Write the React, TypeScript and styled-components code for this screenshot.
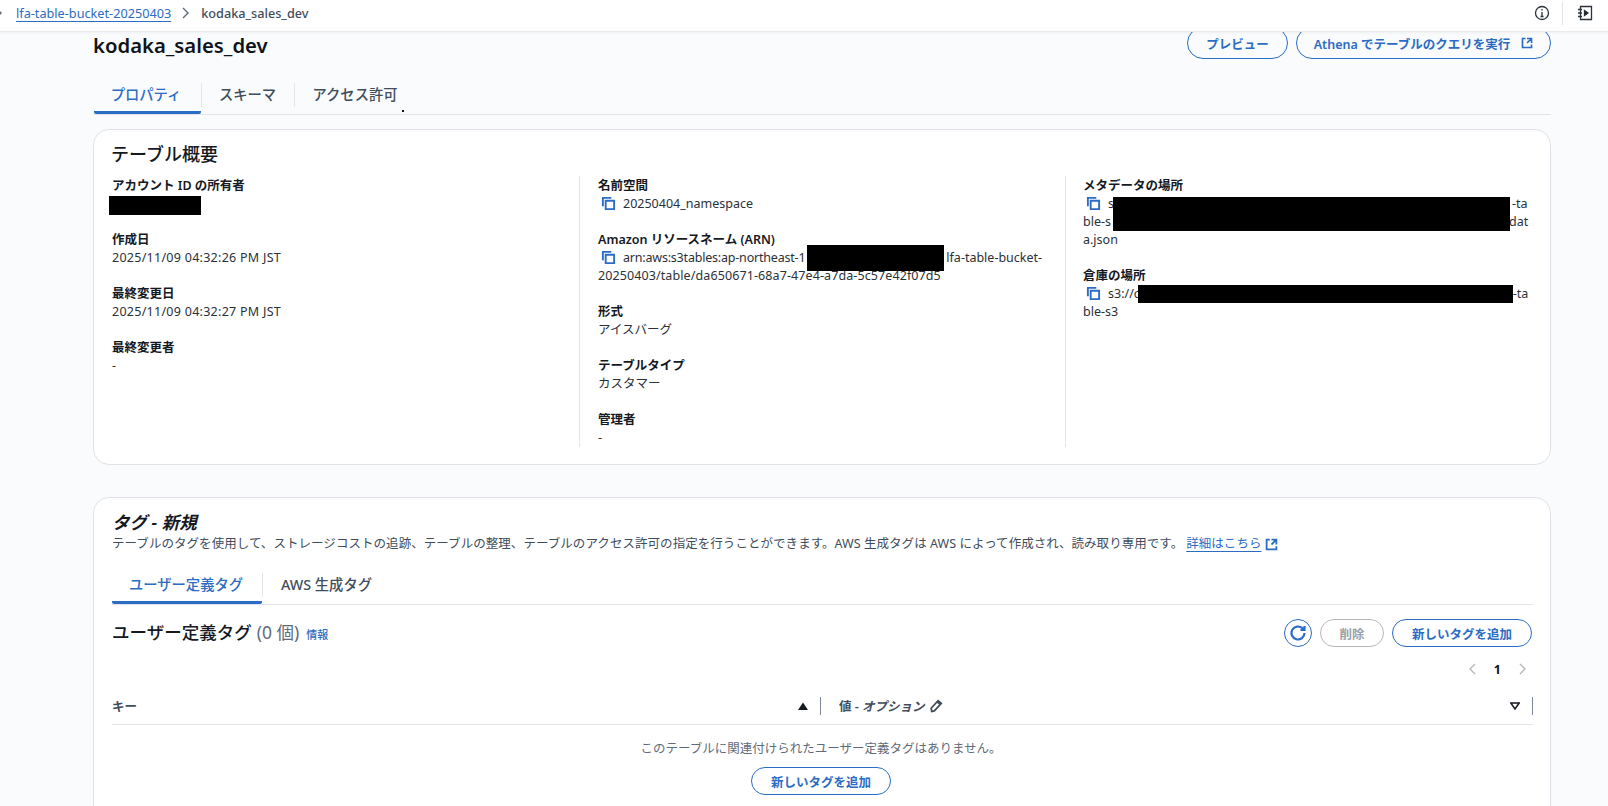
import React from "react";
import styled, { createGlobalStyle } from "styled-components";

const Global = createGlobalStyle`
  html, body { margin: 0; padding: 0; height: 100%; }
  body {
    background: #fafbfd;
    color: #16191f;
    font-family: "Noto Sans", "Noto Sans CJK JP", sans-serif;
    font-size: 13px;
    overflow: hidden;
  }
  * { box-sizing: border-box; }
`;

const blue = "#2b6cc4";

const Page = styled.div`
  width: 1608px;
  height: 806px;
  overflow: hidden;
`;
const TopBar = styled.header`
  position: relative;
  z-index: 2;
  height: 32px;
  background: #fff;
  border-bottom: 1px solid #e9ebed;
  box-shadow: 0 1px 3px rgba(0, 7, 22, 0.05);
  display: flex;
  align-items: center;
  padding: 0 15px 5px 0;
  font-size: 12.7px;
`;
const Chevron = styled.svg<{ $gap: number; $right: number }>`
  width: 12px;
  height: 12px;
  margin: 0 ${(p) => p.$right}px 0 ${(p) => p.$gap}px;
  fill: none;
  stroke: #5f6b7a;
  stroke-width: 1.4;
  flex: none;
`;
const CrumbLink = styled.a`
  color: ${blue};
  text-decoration: underline;
  text-underline-offset: 3px;
`;
const CrumbCurrent = styled.span`
  color: #414d5c;
  font-weight: 500;
`;
const TopIcons = styled.div`
  margin-left: auto;
  display: flex;
  align-items: center;
`;
const TopIcon = styled.svg`
  width: 16px;
  height: 16px;
  fill: none;
  stroke: #2b3139;
  stroke-width: 1.3;
`;
const TopDivider = styled.span`
  width: 1px;
  height: 23px;
  background: #e3e5e8;
  margin: 0 14px 0 12px;
`;
const Main = styled.main`
  padding: 0 57px 0 93px;
`;
const TitleRow = styled.div`
  margin-top: -5px;
  height: 32px;
  display: flex;
  align-items: center;
  justify-content: space-between;
`;
const Title = styled.h1`
  margin: 4px 0 0 0;
  font-size: 20.3px;
  line-height: 32px;
  font-weight: 600;
  color: #0f141a;
`;
const Actions = styled.div`
  display: flex;
  align-items: center;
  gap: 8px;
`;
const PillButton = styled.button<{ $disabled?: boolean; $w?: number; $h?: number }>`
  height: ${(p) => p.$h ?? 28}px;
  width: ${(p) => (p.$w ? `${p.$w}px` : "auto")};
  border-radius: 20px;
  border: 1.5px solid ${(p) => (p.$disabled ? "#b4b8bd" : blue)};
  background: ${(p) => (p.$disabled ? "#fff" : "transparent")};
  color: ${(p) => (p.$disabled ? "#9ba1a8" : blue)};
  font: 600 12.5px "Noto Sans", "Noto Sans CJK JP", sans-serif;
  display: inline-flex;
  align-items: center;
  justify-content: center;
  gap: 11px;
  padding: 0;
`;
const LinkIcon = styled.svg<{ $size?: number }>`
  width: ${(p) => p.$size ?? 12}px;
  height: ${(p) => p.$size ?? 12}px;
  fill: none;
  stroke: ${blue};
  stroke-width: 2.2;
  flex: none;
`;
const TabBar = styled.div<{ $top: number; $inset?: number }>`
  margin-top: ${(p) => p.$top}px;
  height: 36px;
  display: flex;
  padding-left: ${(p) => p.$inset ?? 0}px;
  border-bottom: 1px solid #e1e4e8;
  position: relative;
`;
const Tab = styled.div<{ $active?: boolean; $w: number; $last?: boolean; $shift?: number }>`
  width: ${(p) => p.$w}px;
  height: 35px;
  margin-bottom: -1px;
  display: flex;
  align-items: center;
  justify-content: center;
  padding: 0 ${(p) => p.$shift ?? 0}px 4px 0;
  font-size: 14.3px;
  font-weight: 500;
  color: ${(p) => (p.$active ? blue : "#414d5c")};
  position: relative;
  border-bottom: 3px solid ${(p) => (p.$active ? blue : "transparent")};
  border-radius: 0 0 2px 2px;
  &::after {
    content: "";
    display: ${(p) => (p.$last ? "none" : "block")};
    position: absolute;
    right: -1px;
    top: 4px;
    height: 24px;
    width: 1px;
    background: #e3e5e8;
  }
`;
const Dot = styled.i`
  position: absolute;
  left: 309px;
  top: 31px;
  width: 2px;
  height: 2px;
  background: #111;
`;
const Card = styled.section<{ $top: number; $h: number }>`
  margin-top: ${(p) => p.$top}px;
  height: ${(p) => p.$h}px;
  background: #fff;
  border: 1px solid #dfe2e6;
  border-radius: 16px;
  padding: 0 17px 0 18px;
  position: relative;
`;
const CardTitle = styled.h2`
  margin: 0 0 0 -1px;
  padding-top: 12px;
  font-size: 18px;
  line-height: 24px;
  font-weight: 500;
  color: #16191f;
`;
const Columns = styled.div`
  margin-top: 10px;
  height: 270px;
  display: grid;
  grid-template-columns: 467px 486px 1fr;
`;
const Column = styled.div<{ $first?: boolean; $pad?: number }>`
  border-left: ${(p) => (p.$first ? "none" : "1px solid #e3e5e8")};
  padding-left: ${(p) => p.$pad ?? 0}px;
  padding-top: 1px;
  display: flex;
  flex-direction: column;
  gap: 18px;
`;
const Field = styled.div`
  line-height: 18px;
  font-size: 12.5px;
`;
const Label = styled.div`
  font-weight: 600;
  color: #16191f;
`;
const Value = styled.div`
  color: #2b3139;
  white-space: nowrap;
  min-height: 18px;
`;
const Spaced = styled.span<{ $ls: number }>`
  letter-spacing: ${(p) => p.$ls}px;
`;
const Hidden = styled.span<{ $w: number }>`
  display: inline-block;
  width: ${(p) => p.$w}px;
`;
const CopyIcon = styled.svg`
  width: 15px;
  height: 15px;
  fill: none;
  stroke: ${blue};
  stroke-width: 2;
  vertical-align: -3px;
  margin: 0 7px 0 3px;
`;
const Redact = styled.div<{ $x: number; $y: number; $w: number; $h: number }>`
  position: absolute;
  left: ${(p) => p.$x}px;
  top: ${(p) => p.$y}px;
  width: ${(p) => p.$w}px;
  height: ${(p) => p.$h}px;
  background: #000;
`;
const SectionTitle = styled.h2`
  margin: 0;
  padding-top: 12px;
  font-size: 17.5px;
  line-height: 24px;
  font-weight: 500;
  i { font-style: italic; font-weight: 600; }
`;
const Description = styled.p`
  margin: 2px 0 0;
  font-size: 12.5px;
  line-height: 16px;
  letter-spacing: 0.05px;
  color: #414d5c;
  display: flex;
  align-items: center;
  gap: 3px;
`;
const DocLink = styled.a`
  color: ${blue};
  text-decoration: underline;
  text-underline-offset: 3px;
`;
const TableHeader = styled.div`
  margin-top: 14px;
  height: 28px;
  padding-right: 1px;
  display: flex;
  align-items: center;
  justify-content: space-between;
`;
const TableTitle = styled.h3`
  margin: 0;
  font-size: 17.5px;
  font-weight: 500;
  line-height: 24px;
  display: flex;
  align-items: baseline;
`;
const Count = styled.span`
  font-weight: 400;
  color: #5f6b7a;
  margin-left: 5px;
`;
const InfoLink = styled.a`
  color: ${blue};
  font-size: 11px;
  font-weight: 500;
  margin-left: 7px;
`;
const RoundIcon = styled.button`
  width: 28px;
  height: 28px;
  border-radius: 50%;
  border: 1.5px solid ${blue};
  background: #fff;
  padding: 0;
  display: flex;
  align-items: center;
  justify-content: center;
`;
const Pagination = styled.div`
  margin-top: 11px;
  height: 22px;
  display: flex;
  align-items: center;
  justify-content: flex-end;
  padding-right: 5px;
  gap: 15px;
  font-size: 12.5px;
  font-weight: 700;
  color: #0f141a;
`;
const PageChevron = styled.svg`
  width: 12px;
  height: 14px;
  fill: none;
  stroke: #b4b8bd;
  stroke-width: 1.4;
`;
const Thead = styled.div`
  margin-top: 10px;
  height: 35px;
  display: grid;
  grid-template-columns: 709px 1fr;
  border-bottom: 1px solid #dfe2e6;
  font-size: 12.5px;
  font-weight: 600;
  color: #414d5c;
`;
const Th = styled.div<{ $pad?: number }>`
  display: flex;
  align-items: center;
  padding-left: ${(p) => p.$pad ?? 0}px;
  padding-bottom: 3px;
  i { font-style: italic; }
`;
const SortIcon = styled.svg`
  width: 10px;
  height: 8px;
  margin-left: auto;
  flex: none;
`;
const ColBar = styled.span`
  width: 1px;
  height: 18px;
  background: #7d8998;
  margin-left: 12px;
  flex: none;
`;
const Pencil = styled.svg`
  width: 15px;
  height: 15px;
  margin-left: 4px;
  fill: none;
  stroke: #414d5c;
  stroke-width: 1.6;
`;
const Empty = styled.div`
  display: flex;
  flex-direction: column;
  align-items: center;
  padding: 13px 3px 0 0;
  gap: 10px;
  font-size: 12.5px;
  color: #5f6b7a;
`;

const Copy = () => (
  <CopyIcon viewBox="0 0 16 16">
    <path d="M2 11V2h9" />
    <path d="M5 5h9v9H5z" />
  </CopyIcon>
);
const Ext = ({ size }: { size?: number }) => (
  <LinkIcon viewBox="0 0 16 16" $size={size}>
    <path d="M14 8V2H8M14 2 8 8M6 2H2v12h12v-4" />
  </LinkIcon>
);

export default function App() {
  return (
    <Page>
      <Global />
      <TopBar>
        <Chevron viewBox="0 0 12 12" $gap={-8} $right={12}>
          <path d="m4 1 5 5-5 5" />
        </Chevron>
        <CrumbLink>lfa-table-bucket-20250403</CrumbLink>
        <Chevron viewBox="0 0 12 12" $gap={8} $right={10}>
          <path d="m4 1 5 5-5 5" />
        </Chevron>
        <CrumbCurrent>kodaka_sales_dev</CrumbCurrent>
        <TopIcons>
          <TopIcon viewBox="0 0 16 16">
            <circle cx="8" cy="8" r="6.500" />
            <path d="M8 7v4.500M6.500 11.500h3M8 4v1.500" />
          </TopIcon>
          <TopDivider />
          <TopIcon viewBox="0 0 16 16">
            <path d="M3.500 1.500h11v13h-11zM1 4.500h4M1 8h4M1 11.500h4" />
            <path d="M7.500 5.500 11 8l-3.500 2.500z" fill="#16191f" />
          </TopIcon>
        </TopIcons>
      </TopBar>
      <Main>
        <TitleRow>
          <Title>kodaka_sales_dev</Title>
          <Actions>
            <PillButton $w={101} $h={32}>プレビュー</PillButton>
            <PillButton $w={255} $h={32}>
              Athena でテーブルのクエリを実行
              <Ext />
            </PillButton>
          </Actions>
        </TitleRow>
        <TabBar $top={20} $inset={1}>
          <Tab $active $w={107} $shift={3}>プロパティ</Tab>
          <Tab $w={93}>スキーマ</Tab>
          <Tab $w={122} $last>アクセス許可</Tab>
          <Dot />
        </TabBar>
        <Card $top={14} $h={336}>
          <CardTitle>テーブル概要</CardTitle>
          <Columns>
            <Column $first>
              <Field>
                <Label>アカウント ID の所有者</Label>
                <Value />
              </Field>
              <Field>
                <Label>作成日</Label>
                <Value><Spaced $ls={0.27}>2025/11/09 04:32:26 PM JST</Spaced></Value>
              </Field>
              <Field>
                <Label>最終変更日</Label>
                <Value><Spaced $ls={0.27}>2025/11/09 04:32:27 PM JST</Spaced></Value>
              </Field>
              <Field>
                <Label>最終変更者</Label>
                <Value>-</Value>
              </Field>
            </Column>
            <Column $pad={18}>
              <Field>
                <Label>名前空間</Label>
                <Value><Copy />20250404_namespace</Value>
              </Field>
              <Field>
                <Label>Amazon リソースネーム (ARN)</Label>
                <Value>
                  <Copy /><Spaced $ls={-0.2}>arn:aws:s3tables:ap-northeast-1</Spaced>
                  <Hidden $w={141} />lfa-table-bucket-
                  <br />
                  <Spaced $ls={0.1}>20250403/table/da650671-68a7-47e4-a7da-5c57e42f07d5</Spaced>
                </Value>
              </Field>
              <Field>
                <Label>形式</Label>
                <Value>アイスバーグ</Value>
              </Field>
              <Field>
                <Label>テーブルタイプ</Label>
                <Value>カスタマー</Value>
              </Field>
              <Field>
                <Label>管理者</Label>
                <Value>-</Value>
              </Field>
            </Column>
            <Column $pad={17}>
              <Field>
                <Label>メタデータの場所</Label>
                <Value>
                  <Copy />s<Hidden $w={398} />-ta
                  <br />
                  ble-s<Hidden $w={398} />dat
                  <br />
                  a.json
                </Value>
              </Field>
              <Field>
                <Label>倉庫の場所</Label>
                <Value>
                  <Copy />s3://c<Hidden $w={373} />-ta
                  <br />
                  ble-s3
                </Value>
              </Field>
            </Column>
          </Columns>
          <Redact $x={15} $y={66} $w={92} $h={19} />
          <Redact $x={713} $y={115} $w={137} $h={26} />
          <Redact $x={1019} $y={67} $w={397} $h={34} />
          <Redact $x={1044} $y={155} $w={375} $h={18} />
        </Card>
        <Card $top={32} $h={400}>
          <SectionTitle>
            <i>タグ - 新規</i>
          </SectionTitle>
          <Description>
            テーブルのタグを使用して、ストレージコストの追跡、テーブルの整理、テーブルのアクセス許可の指定を行うことができます。AWS 生成タグは AWS によって作成され、読み取り専用です。
            <DocLink>詳細はこちら</DocLink>
            <Ext size={13} />
          </Description>
          <TabBar $top={17}>
            <Tab $active $w={150} $shift={2}>ユーザー定義タグ</Tab>
            <Tab $w={129} $last>AWS 生成タグ</Tab>
          </TabBar>
          <TableHeader>
            <TableTitle>
              ユーザー定義タグ<Count>(0 個)</Count>
              <InfoLink>情報</InfoLink>
            </TableTitle>
            <Actions>
              <RoundIcon>
                <LinkIcon viewBox="0 0 16 16" $size={16}>
                  <path d="M14.500 8a6.500 6.500 0 1 1-2-4.700L14 4.800M14.500 1v4h-4" />
                </LinkIcon>
              </RoundIcon>
              <PillButton $disabled $w={64}>削除</PillButton>
              <PillButton $w={140}>新しいタグを追加</PillButton>
            </Actions>
          </TableHeader>
          <Pagination>
            <PageChevron viewBox="0 0 12 14"><path d="M8 2 3 7l5 5" /></PageChevron>
            <span>1</span>
            <PageChevron viewBox="0 0 12 14"><path d="m4 2 5 5-5 5" /></PageChevron>
          </Pagination>
          <Thead>
            <Th>
              キー
              <SortIcon viewBox="0 0 10 8"><path d="M5 0.500 10 8H0z" fill="#16191f" /></SortIcon>
              <ColBar />
            </Th>
            <Th $pad={18}>
              値 -&nbsp;<i>オプション</i>
              <Pencil viewBox="0 0 14 14"><path d="M2.500 12.500 2 9.500 8.500 2.500l3 2.500-6.500 7zM7.500 3.500l3 2.500" /></Pencil>
              <SortIcon viewBox="0 0 10 8"><path d="M0.800 1h8.400L5 7z" fill="none" stroke="#16191f" strokeWidth="1.500" /></SortIcon>
              <ColBar />
            </Th>
          </Thead>
          <Empty>
            このテーブルに関連付けられたユーザー定義タグはありません。
            <PillButton $w={140}>新しいタグを追加</PillButton>
          </Empty>
        </Card>
      </Main>
    </Page>
  );
}
